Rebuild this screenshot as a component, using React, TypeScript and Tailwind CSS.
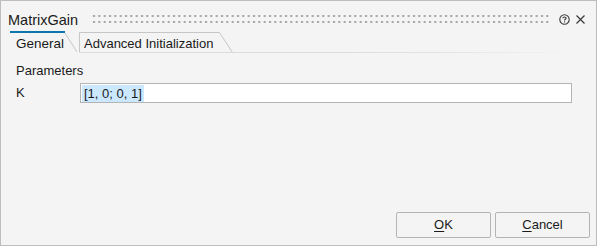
import React from "react";

const font = { fontFamily: '"Liberation Sans", Arial, sans-serif' };

function Grip() {
  return (
    <svg className="flex-1 h-[12px]" preserveAspectRatio="none">
      <defs>
        <pattern id="gp" x="0" y="0" width="5.333" height="6" patternUnits="userSpaceOnUse">
          <rect x="0" y="0" width="2" height="2" fill="#a3a3a3" />
        </pattern>
      </defs>
      <rect x="0" y="0" width="100%" height="8" fill="url(#gp)" />
    </svg>
  );
}

export default function App() {
  return (
    <div
      className="w-[597px] h-[246px] border border-[#bdbdbd] bg-[#f4f4f4] flex flex-col text-[#1a1a1a] overflow-hidden"
      style={font}
    >
      {/* Title bar */}
      <div className="h-[30px] flex items-start pl-[7px] pr-[10px] pt-[9px]">
        <span className="text-[14.5px] leading-[20px]">MatrixGain</span>
        <div className="flex-1 flex items-start pl-[15px] pt-[5px] pr-[9px]">
          <Grip />
        </div>
        <div className="flex items-center gap-[5px] pt-[4px]">
          <svg width="11" height="11" viewBox="0 0 11 11">
            <circle cx="5.5" cy="5.5" r="4.7" fill="none" stroke="#3a3a3a" strokeWidth="1.1" />
            <path d="M3.9 4.3 C3.9 2.6 7.1 2.6 7.1 4.3 C7.1 5.3 5.5 5.3 5.5 6.5" fill="none" stroke="#3a3a3a" strokeWidth="1.1" />
            <rect x="5" y="7.4" width="1.1" height="1.1" fill="#3a3a3a" />
          </svg>
          <svg width="11" height="11" viewBox="0 0 11 11">
            <path d="M1.5 1.5 L9.5 9.5 M9.5 1.5 L1.5 9.5" stroke="#3a3a3a" strokeWidth="1.2" />
          </svg>
        </div>
      </div>

      {/* Tabs */}
      <div className="h-[22px] flex items-stretch pl-[9px] pr-[18px]">
        <div className="relative w-[67px] h-[22px] text-[13.5px] leading-[22px] pl-[6px] pt-[2px]">
          <svg className="absolute left-0 top-0" width="67" height="22">
            <line x1="0" y1="1" x2="55" y2="1" stroke="#0d77ad" strokeWidth="2" />
            <line x1="55" y1="2" x2="67" y2="21" stroke="#c6c6c6" strokeWidth="1" />
          </svg>
          <span className="relative">General</span>
        </div>
        <div className="relative ml-[2px] w-[154px] h-[22px] text-[13px] leading-[22px] pl-[5px] pt-[2px]">
          <svg className="absolute left-0 top-0" width="154" height="22">
            <path d="M0.5 22 V1.5 H140.5 L153.5 21.5" fill="none" stroke="#c6c6c6" strokeWidth="1" />
            <line x1="0" y1="21.5" x2="154" y2="21.5" stroke="#dcdcdc" strokeWidth="1" />
          </svg>
          <span className="relative">Advanced Initialization</span>
        </div>
        <div className="flex-1 flex flex-col justify-end">
          <div className="h-px bg-gradient-to-r from-[#dcdcdc] via-[#e0e0e0] to-[#f4f4f4]" />
        </div>
      </div>

      {/* Content */}
      <div className="flex flex-col pl-[15px] pr-[24px] pt-[10px] text-[13px]">
        <div className="leading-[16px]">Parameters</div>
        <div className="flex items-center mt-[4px] h-[20px]">
          <div className="w-[64px] leading-[16px]">K</div>
          <div className="flex-1 h-[20px] border border-[#b4b4b4] bg-white flex items-center pl-px">
            <span className="bg-[#cce8ff] leading-[17px] px-[2px] text-[13px]">[1, 0; 0, 1]</span>
          </div>
        </div>
      </div>

      {/* Buttons */}
      <div className="mt-auto flex justify-end gap-[4px] pr-[6px] pb-[7px]">
        <button className="w-[95px] h-[26px] border border-[#b4b4b4] rounded-[2px] bg-[#f4f4f4] text-[13px]">
          <span className="underline underline-offset-2">O</span>K
        </button>
        <button className="w-[95px] h-[26px] border border-[#b4b4b4] rounded-[2px] bg-[#f4f4f4] text-[13px]">
          <span className="underline underline-offset-2">C</span>ancel
        </button>
      </div>
    </div>
  );
}
